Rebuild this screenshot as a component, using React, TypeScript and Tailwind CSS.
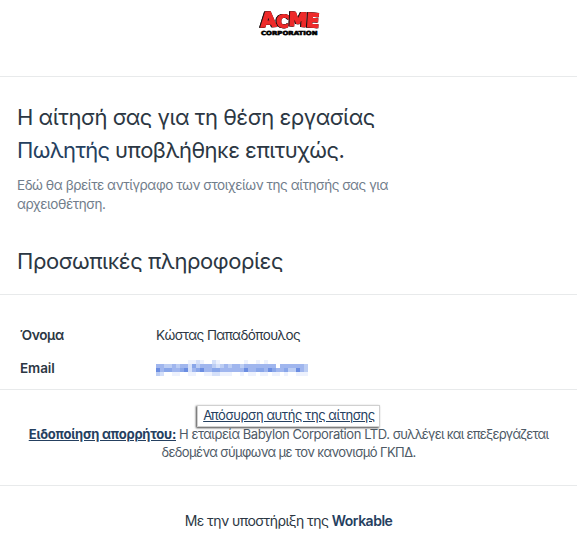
const mosaic = [
  "00000000112100210000001001010000000000",
  "44334344253444323434434444444404444443",
  "64554456245644554444446445546544533643",
  "32001100110011221110010110110110100111",
];
const shades = ["#ffffff", "#eef2fd", "#d5e0f9", "#bccdf3", "#a0b6ee", "#89a6e9", "#6b8de1", "#4a72d8"];

function Logo() {
  return (
    <svg className="overflow-visible" width="60" height="28" viewBox="0 0 60 28" role="img" aria-label="ACME Corporation">
      <text
        y="18"
        fontFamily="DejaVu Sans, sans-serif"
        fontWeight="bold"
        fontSize="19"
        fill="#ee2a2a"
        stroke="#ee2a2a"
        strokeWidth="1.5"
        className="[filter:drop-shadow(0.4px_0.5px_0_#1c1011)_drop-shadow(-0.5px_0_0_#1c1011)]"
      >
        <tspan x="2" fontSize="20" rotate="-3">A</tspan>
        <tspan x="17" dy="-0.2" fontSize="17" rotate="4">C</tspan>
        <tspan x="29.5" dy="-1.3" fontSize="18.5" rotate="3">M</tspan>
        <tspan x="47" dy="1.3" fontSize="19" rotate="4">E</tspan>
      </text>
      <text x="2" y="25.7" fontFamily="DejaVu Sans, sans-serif" fontWeight="bold" fontSize="5.5" textLength="56.5" lengthAdjust="spacingAndGlyphs" fill="#000" stroke="#000" strokeWidth="0.6">CORPORATION</text>
    </svg>
  );
}

function HiddenEmail() {
  return (
    <svg className="-mt-px block" width="152" height="16" viewBox="0 0 152 16" shapeRendering="crispEdges" aria-label="Email">
      {mosaic.map((row, y) => row.split("").map((c, x) => (
        <rect key={`${x}-${y}`} x={x * 4} y={y * 4} width="4" height="4" fill={shades[Number(c)]} />
      )))}
    </svg>
  );
}

export default function App() {
  return (
    <div className="h-[542px] w-[577px] overflow-hidden bg-white font-['Inter','Noto_Sans',sans-serif] text-[#2c3743]">
      <header className="flex h-[77px] justify-center border-b border-[#e8eaeb] pt-[9px]">
        <Logo />
      </header>
      <main>
        <section className="h-[218px] border-b border-[#e8eaeb] pl-[17px] pt-[24px]">
          <h1 className="whitespace-nowrap text-[22px] leading-[33px] tracking-[-0.48px]">
            <span className="block">Η αίτησή σας για τη θέση εργασίας</span>
            <span className="block tracking-[-0.52px]"><span className="text-[#254060] tracking-[-0.7px]">Πωλητής</span> υποβλήθηκε επιτυχώς.</span>
          </h1>
          <p className="mt-[9px] whitespace-nowrap text-[13.5px] leading-[19px] tracking-[-0.45px] text-[#717d8b]">
            <span className="block">Εδώ θα βρείτε αντίγραφο των στοιχείων της αίτησής σας για</span>
            <span className="block">αρχειοθέτηση.</span>
          </p>
          <h2 className="mt-[31px] whitespace-nowrap text-[22px] leading-[33px] tracking-[-0.45px]">Προσωπικές πληροφορίες</h2>
        </section>
        <dl className="grid h-[95px] grid-cols-[136px_1fr] grid-rows-[33px_33px] items-center border-b border-[#e8eaeb] pl-[20px] pt-[24px] text-[13.5px]">
          <dt className="font-semibold tracking-[-0.4px]">Όνομα</dt>
          <dd className="tracking-[-0.6px]">Κώστας Παπαδόπουλος</dd>
          <dt className="font-semibold tracking-[-0.1px]">Email</dt>
          <dd><HiddenEmail /></dd>
        </dl>
        <section className="flex h-[96px] flex-col items-center border-b border-[#e8eaeb] pt-[15px] text-[13px] text-[#4e5a66]">
          <a className="flex h-[22px] w-[183px] items-center justify-center whitespace-nowrap border border-[#d0d0d0] bg-white pl-[1px] tracking-[-0.44px] text-[#254060] underline shadow-[-1px_1px_2px_#444]">Απόσυρση αυτής της αίτησης</a>
          <p className="-mt-[2px] whitespace-nowrap text-center leading-[18px] tracking-[-0.6px]">
            <span className="block"><b className="tracking-[-0.23px] text-[#254060] underline">Ειδοποίηση απορρήτου:</b> <span className="tracking-[-0.5px]">Η εταιρεία </span><span className="tracking-[-0.43px]">Babylon Corporation LTD. </span><span className="tracking-[-0.74px]">συλλέγει και επεξεργάζεται</span></span>
            <span className="block">δεδομένα σύμφωνα με τον κανονισμό ΓΚΠΔ.</span>
          </p>
        </section>
      </main>
      <footer className="pt-[25px] text-center text-[14px] leading-[20px] tracking-[-0.57px]">
        Με την υποστήριξη της <span className="font-semibold tracking-[-0.5px] text-[#254060]">Workable</span>
      </footer>
    </div>
  );
}
